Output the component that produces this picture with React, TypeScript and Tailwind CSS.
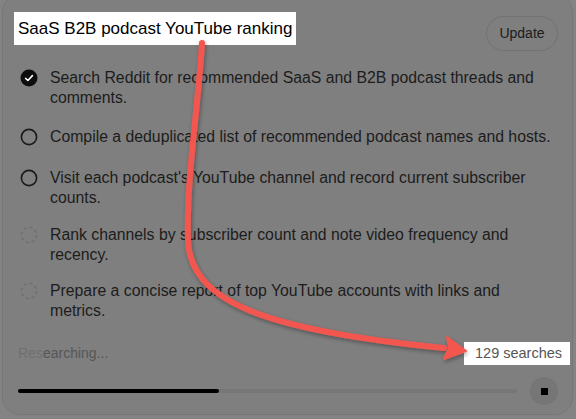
const steps = [
  { state: 'done', text: 'Search Reddit for recommended SaaS and B2B podcast threads and comments.', mt: 'mt-[17px]' },
  { state: 'open', text: 'Compile a deduplicated list of recommended podcast names and hosts.', mt: 'mt-[19px]' },
  { state: 'open', text: "Visit each podcast's YouTube channel and record current subscriber counts.", mt: 'mt-[21px]' },
  { state: 'pending', text: 'Rank channels by subscriber count and note video frequency and recency.', mt: 'mt-[17px]' },
  { state: 'pending', text: 'Prepare a concise report of top YouTube accounts with links and metrics.', mt: 'mt-[16px]' },
]

function StepIcon({ state }: { state: string }) {
  if (state === 'done') {
    return (
      <svg width="18" height="18" viewBox="0 0 18 18">
        <circle cx="9" cy="9" r="8.5" fill="#0d0d0d" />
        <path d="M5.6 9.3 L7.9 11.5 L12.4 6.6" fill="none" stroke="#fff" strokeWidth="1.6" strokeLinecap="round" strokeLinejoin="round" />
      </svg>
    )
  }
  if (state === 'open') {
    return (
      <svg width="18" height="18" viewBox="0 0 18 18">
        <circle cx="9" cy="9" r="7.6" fill="none" stroke="#1a1a1a" strokeWidth="1.6" />
      </svg>
    )
  }
  return (
    <svg width="18" height="18" viewBox="0 0 18 18">
      <circle cx="9" cy="9" r="7.6" fill="none" stroke="#6c6c6c" strokeWidth="1.2" strokeDasharray="3.2 2.8" />
    </svg>
  )
}

function Arrow() {
  return (
    <svg className="absolute left-0 top-0 pointer-events-none" width="576" height="419" viewBox="0 0 576 419">
      <defs>
        <filter id="sh" x="-10%" y="-10%" width="120%" height="120%">
          <feDropShadow dx="1" dy="2" stdDeviation="2" floodColor="#000" floodOpacity="0.35" />
        </filter>
      </defs>
      <g filter="url(#sh)">
        <path
          d="M202 43 C198 110 186 180 188 240 C190 300 260 330 444 348"
          fill="none"
          stroke="#f2574f"
          strokeWidth="6"
          strokeLinecap="round"
        />
        <path d="M466 351 L447 337 L449 348 L444 359 Z" fill="#f2574f" stroke="#f2574f" strokeWidth="2" strokeLinejoin="round" />
      </g>
    </svg>
  )
}

export default function App() {
  return (
    <div className="relative w-[576px] h-[419px] overflow-hidden bg-[#838383]" style={{ fontFamily: '"Liberation Sans", Arial, sans-serif' }}>
      <div className="ml-[2px] mr-[3px] -mt-[6px] h-[421px] rounded-[18px] border border-[#777777] bg-[#7f7f7f] flex flex-col">
        <div className="flex items-start justify-between pl-[11px] pr-[14px] pt-[17px]">
          <div className="bg-white h-[33px] px-[4px] flex items-center text-[17px] text-black">
            SaaS B2B podcast YouTube ranking
          </div>
          <button className="mt-[4px] h-[35px] w-[72px] rounded-full border border-[#727272] text-[14px] text-[#1c1c1c]">
            Update
          </button>
        </div>

        <div className="flex flex-col pl-[17px] pr-[4px]">
          {steps.map((s, i) => (
            <div key={i} className={`flex gap-[12px] ${s.mt}`}>
              <div className="w-[18px] h-[20px] flex items-center shrink-0">
                <StepIcon state={s.state} />
              </div>
              <p className="max-w-[505px] text-[15.8px] leading-[20px] text-[#1c1c1c]">{s.text}</p>
            </div>
          ))}
        </div>

        <div className="mt-[21px] pl-[15px] pr-[2px] flex items-center justify-between">
          <span className="text-[14px] text-[#565656]">
            <span className="text-[#6f6f6f]">Res</span>earching...
          </span>
          <span className="bg-white h-[23px] w-[106px] flex items-center pl-[11px] text-[14.5px] text-[#555555]">
            129 searches
          </span>
        </div>

        <div className="mt-[12px] pl-[15px] pr-[14px] flex items-center gap-[13px]">
          <div className="flex-1 h-[4px] rounded-full bg-[#777777]">
            <div className="h-full w-[201px] rounded-full bg-black" />
          </div>
          <div className="w-[28px] h-[28px] rounded-full bg-[#767676] flex items-center justify-center">
            <div className="w-[7px] h-[7px] bg-black" />
          </div>
        </div>
      </div>
      <Arrow />
    </div>
  )
}
